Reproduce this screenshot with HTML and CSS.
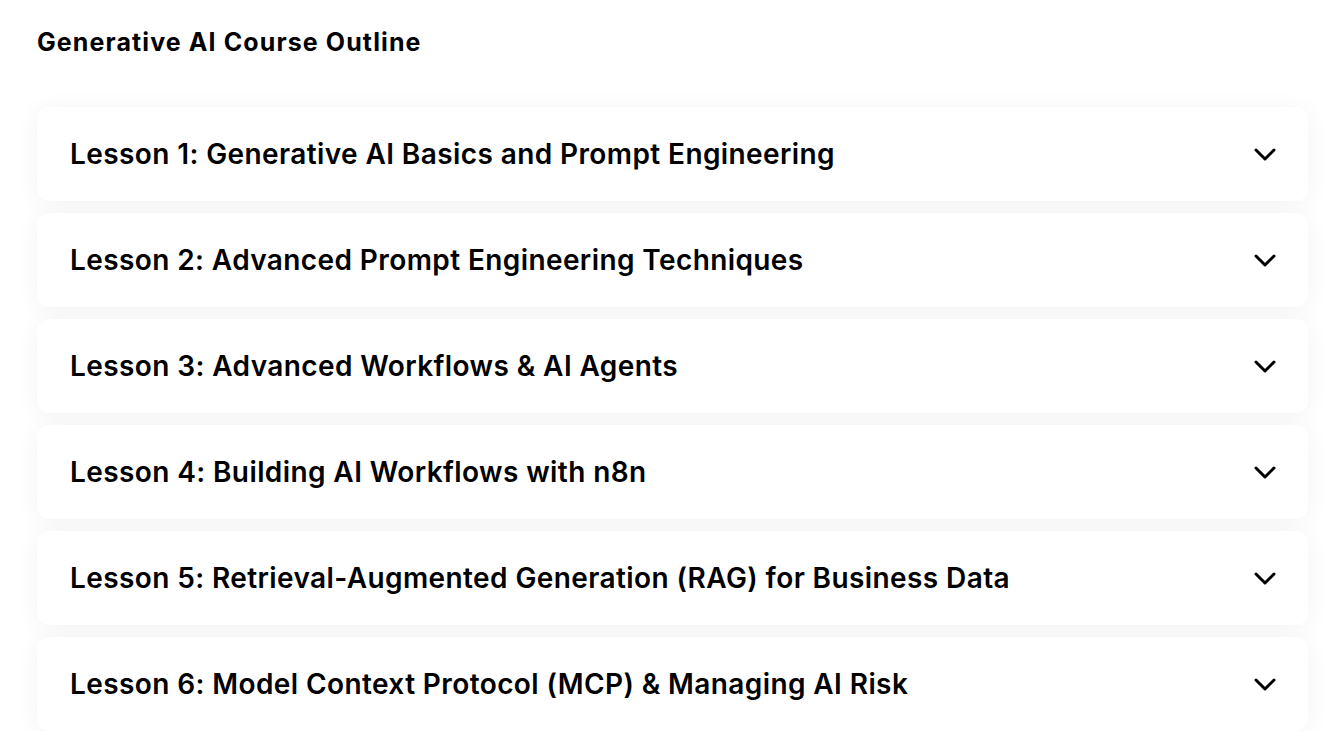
FILE: index.html
```html
<!DOCTYPE html>
<html>
<head>
<meta charset="utf-8">
<link rel="stylesheet" href="styles.css">
</head>
<body>
<main class="outline">
  <h1 class="outline-title">Generative AI Course Outline</h1>
  <div class="lessons">
    <div class="lesson"><span class="lesson-name">Lesson 1: Generative AI Basics and Prompt Engineering</span><svg class="chev" viewBox="0 0 22 13" width="22" height="13"><polyline points="2,2 11,11 20,2"/></svg></div>
    <div class="lesson"><span class="lesson-name">Lesson 2: Advanced Prompt Engineering Techniques</span><svg class="chev" viewBox="0 0 22 13" width="22" height="13"><polyline points="2,2 11,11 20,2"/></svg></div>
    <div class="lesson"><span class="lesson-name">Lesson 3: Advanced Workflows &amp; AI Agents</span><svg class="chev" viewBox="0 0 22 13" width="22" height="13"><polyline points="2,2 11,11 20,2"/></svg></div>
    <div class="lesson"><span class="lesson-name">Lesson 4: Building AI Workflows with n8n</span><svg class="chev" viewBox="0 0 22 13" width="22" height="13"><polyline points="2,2 11,11 20,2"/></svg></div>
    <div class="lesson"><span class="lesson-name">Lesson 5: Retrieval-Augmented Generation (RAG) for Business Data</span><svg class="chev" viewBox="0 0 22 13" width="22" height="13"><polyline points="2,2 11,11 20,2"/></svg></div>
    <div class="lesson"><span class="lesson-name">Lesson 6: Model Context Protocol (MCP) &amp; Managing AI Risk</span><svg class="chev" viewBox="0 0 22 13" width="22" height="13"><polyline points="2,2 11,11 20,2"/></svg></div>
  </div>
</main>
</body>
</html>
```

FILE: styles.css
```css
html, body {
  margin: 0;
  padding: 0;
  background: #ffffff;
}
body {
  font-family: Inter, "Noto Sans", sans-serif;
  color: #000000;
}
.outline {
  padding: 27px 24px 0 37px;
}
.outline-title {
  margin: 0;
  font-size: 25px;
  font-weight: 700;
  line-height: 31px;
  letter-spacing: 1.1px;
}
.lessons {
  margin-top: 49px;
  display: flex;
  flex-direction: column;
  gap: 12px;
}
.lesson {
  height: 94px;
  box-sizing: border-box;
  background: #ffffff;
  border-radius: 12px;
  box-shadow: 0 3px 24px rgba(0, 0, 0, 0.05);
  display: flex;
  align-items: center;
  justify-content: space-between;
  padding: 0 32px 0 33px;
}
.lesson-name {
  font-size: 28px;
  font-weight: 600;
  letter-spacing: 0.4px;
}
.chev {
  fill: none;
  stroke: #000000;
  stroke-width: 3;
  stroke-linecap: round;
  stroke-linejoin: round;
}
```
